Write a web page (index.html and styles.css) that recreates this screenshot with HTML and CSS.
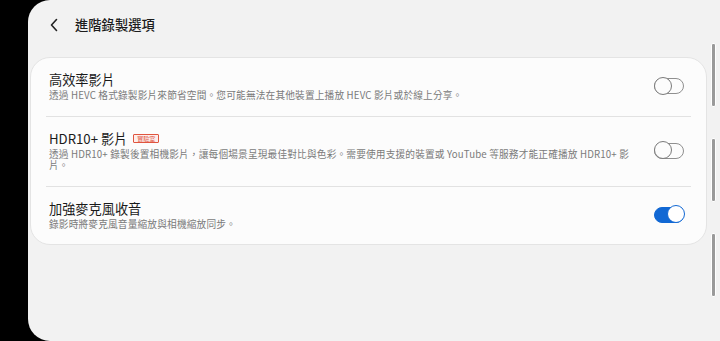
FILE: index.html
```html
<!DOCTYPE html>
<html lang="zh-Hant">
<head>
    <meta charset="UTF-8">
    <meta name="viewport" content="width=device-width, initial-scale=1.0">
    <title>進階錄製選項</title>
    <link rel="stylesheet" href="styles.css">
</head>
<body>

    <div class="screen">
        <div class="main">
            <!-- Top bar -->
            <header class="topbar">
                <svg class="back" width="10" height="14" viewBox="0 0 10 14">
                    <path d="M7.5 1.5 L2.5 7 L7.5 12.5" fill="none" stroke="#222" stroke-width="1.6" stroke-linecap="round" stroke-linejoin="round"/>
                </svg>
                <h1>進階錄製選項</h1>
            </header>

            <!-- Settings card -->
            <div class="card">
                <div class="row">
                    <div class="text">
                        <div class="title">高效率影片</div>
                        <div class="sub">透過 HEVC 格式錄製影片來節省空間。您可能無法在其他裝置上播放 HEVC 影片或於線上分享。</div>
                    </div>
                    <div class="toggle"><span class="knob"></span></div>
                </div>
                <div class="row">
                    <div class="text">
                        <div class="title">HDR10+ 影片 <span class="badge">實驗室</span></div>
                        <div class="sub">透過 HDR10+ 錄製後置相機影片，讓每個場景呈現最佳對比與色彩。需要使用支援的裝置或 YouTube 等服務才能正確播放 HDR10+ 影片。</div>
                    </div>
                    <div class="toggle"><span class="knob"></span></div>
                </div>
                <div class="row">
                    <div class="text">
                        <div class="title">加強麥克風收音</div>
                        <div class="sub">錄影時將麥克風音量縮放與相機縮放同步。</div>
                    </div>
                    <div class="toggle on"><span class="knob"></span></div>
                </div>
            </div>
        </div>

        <!-- Scroll indicator -->
        <div class="rail">
            <span class="bar"></span>
            <span class="bar"></span>
            <span class="bar"></span>
        </div>
    </div>

</body>
</html>
```

FILE: styles.css
```css
body {
    margin: 0;
    background-color: #000;
    font-family: 'Noto Sans CJK TC', 'Noto Sans', sans-serif;
}

/* Phone screen area */
.screen {
    margin-left: 28px;
    height: 341px;
    background-color: #f2f2f2;
    border-radius: 22px 0 0 22px;
    display: flex;
}

.main {
    flex: 1;
    padding-left: 2px;
}

.topbar {
    height: 48px;
    display: flex;
    align-items: center;
    padding-left: 19px;
}

.back {
    margin-top: 1px;
}

.topbar h1 {
    margin: 0 0 0 16px;
    font-size: 13.3px;
    font-weight: 500;
    color: #1c1c1c;
}

/* Card with the switches */
.card {
    margin-top: 9px;
    background-color: #fcfcfc;
    border: 1px solid #e4e4e4;
    border-radius: 20px;
}

.row {
    display: flex;
    align-items: center;
    margin: 0 15px;
    padding: 13px 0 14px 3px;
    border-bottom: 1px solid #e2e2e2;
}

.row:last-child {
    border-bottom: none;
}

.text {
    flex: 1;
    padding-right: 20px;
}

.title {
    font-size: 13.2px;
    line-height: 17px;
    color: #1a1a1a;
    display: flex;
    align-items: center;
}

.badge {
    margin-left: 6px;
    font-size: 6px;
    line-height: 7px;
    padding: 0 3px;
    color: #e0553f;
    background-color: #fdeeec;
    border: 1px solid #e0553f;
    border-radius: 1px;
}

.sub {
    margin-top: 2px;
    font-size: 9.7px;
    line-height: 11.5px;
    letter-spacing: 0.15px;
    color: #7a7a7a;
}

/* Toggle switches */
.toggle {
    position: relative;
    width: 30px;
    height: 16px;
    box-sizing: border-box;
    border: 1.5px solid #8f8f8f;
    border-radius: 8px;
    margin-right: 7px;
}

.toggle .knob {
    position: absolute;
    left: -1.5px;
    top: -2.5px;
    width: 18px;
    height: 18px;
    box-sizing: border-box;
    border: 1.5px solid #7a7a7a;
    border-radius: 50%;
    background-color: #fcfcfc;
}

.toggle.on {
    background-color: #1168d4;
    border-color: #1168d4;
}

.toggle.on .knob {
    left: auto;
    right: -1.5px;
    border-color: #1168d4;
    background-color: #fff;
}

/* Right scroll indicator */
.rail {
    width: 13px;
    display: flex;
    flex-direction: column;
    padding-top: 43px;
    gap: 31px;
}

.bar {
    display: block;
    margin-left: 4px;
    width: 3px;
    height: 62px;
    background-color: #9a9a9a;
    border: 1px solid #fff;
    border-radius: 2px;
}
```
